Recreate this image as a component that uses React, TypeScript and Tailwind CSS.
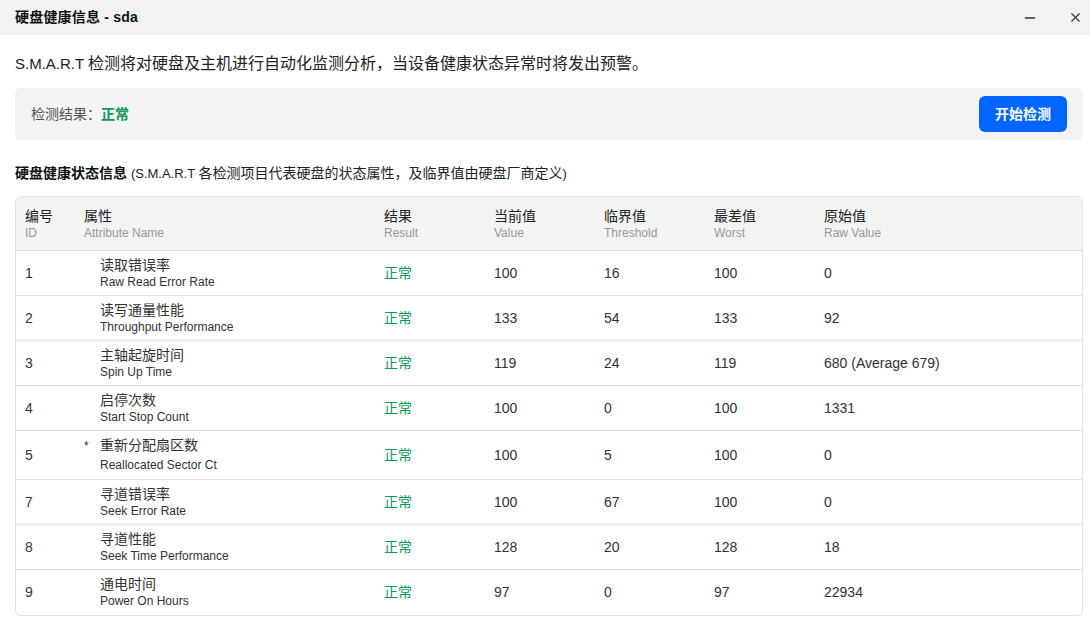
import { Minus, X } from "lucide-react";

interface SmartRow {
  id: string;
  name: string;
  en: string;
  value: string;
  threshold: string;
  worst: string;
  raw: string;
  star?: boolean;
}

const ROWS: SmartRow[] = [
  { id: "1", name: "读取错误率", en: "Raw Read Error Rate", value: "100", threshold: "16", worst: "100", raw: "0" },
  { id: "2", name: "读写通量性能", en: "Throughput Performance", value: "133", threshold: "54", worst: "133", raw: "92" },
  { id: "3", name: "主轴起旋时间", en: "Spin Up Time", value: "119", threshold: "24", worst: "119", raw: "680 (Average 679)" },
  { id: "4", name: "启停次数", en: "Start Stop Count", value: "100", threshold: "0", worst: "100", raw: "1331" },
  { id: "5", name: "重新分配扇区数", en: "Reallocated Sector Ct", value: "100", threshold: "5", worst: "100", raw: "0", star: true },
  { id: "7", name: "寻道错误率", en: "Seek Error Rate", value: "100", threshold: "67", worst: "100", raw: "0" },
  { id: "8", name: "寻道性能", en: "Seek Time Performance", value: "128", threshold: "20", worst: "128", raw: "18" },
  { id: "9", name: "通电时间", en: "Power On Hours", value: "97", threshold: "0", worst: "97", raw: "22934" },
];

const HEADERS = [
  { zh: "编号", en: "ID", w: "w-[59px]" },
  { zh: "属性", en: "Attribute Name", w: "w-[300px]" },
  { zh: "结果", en: "Result", w: "w-[110px]" },
  { zh: "当前值", en: "Value", w: "w-[110px]" },
  { zh: "临界值", en: "Threshold", w: "w-[110px]" },
  { zh: "最差值", en: "Worst", w: "w-[110px]" },
  { zh: "原始值", en: "Raw Value", w: "flex-1" },
];

function Row({ row, last }: { row: SmartRow; last: boolean }) {
  return (
    <div className={`flex items-center pl-[9px] text-[14px] text-[#333] ${row.star ? "h-[49px]" : "h-[45px]"} ${last ? "" : "border-b border-[#e3e3e3]"}`}>
      <div className="w-[59px]">{row.id}</div>
      <div className="w-[300px] flex items-start">
        <span className="w-[16px] text-[12px] leading-[16px] pt-[1px]">{row.star ? "*" : ""}</span>
        <div className="flex flex-col">
          <span className="text-[14px] leading-[17px]">{row.name}</span>
          <span className={`text-[12px] leading-[16px] ${row.star ? "mt-[3px]" : ""}`}>{row.en}</span>
        </div>
      </div>
      <div className="w-[110px] text-[#0a9a5a]">正常</div>
      <div className="w-[110px]">{row.value}</div>
      <div className="w-[110px]">{row.threshold}</div>
      <div className="w-[110px]">{row.worst}</div>
      <div className="flex-1">{row.raw}</div>
    </div>
  );
}

export default function App() {
  return (
    <div className="w-[1090px] h-[621px] bg-white overflow-hidden" style={{ fontFamily: '"Liberation Sans", Arial, "Noto Sans CJK SC", sans-serif' }}>
      {/* title bar */}
      <div className="h-[35px] bg-[#f2f2f2] flex items-center pl-[15px] pr-[7px]">
        <div className="text-[14px] font-bold text-[#111] tracking-[0.2px]">硬盘健康信息 - sda</div>
        <div className="ml-auto flex items-center gap-[30px] text-[#333]">
          <Minus className="w-[16px] h-[16px]" strokeWidth={2} />
          <X className="w-[15px] h-[15px]" strokeWidth={1.8} />
        </div>
      </div>

      <div className="px-[15px] pr-[7px]">
        <p className="mt-[19px] text-[16px] leading-[20px] text-[#222]">
          <span className="text-[15px]">S.M.A.R.T </span>检测将对硬盘及主机进行自动化监测分析，当设备健康状态异常时将发出预警。
        </p>

        <div className="mt-[14px] h-[52px] bg-[#f3f3f3] rounded-[6px] flex items-center pl-[16px] pr-[16px]">
          <span className="text-[14px] text-[#555]">检测结果：</span>
          <span className="text-[14px] font-bold text-[#0a9a5a]">正常</span>
          <button className="ml-auto h-[36px] w-[88px] bg-[#0066ff] rounded-[6px] text-white text-[14px] font-bold">
            开始检测
          </button>
        </div>

        <div className="mt-[24px] text-[14px] leading-[18px] text-[#222]">
          <span className="font-bold text-[#111]">硬盘健康状态信息</span> <span className="text-[13px]">(S.M.A.R.T </span>各检测项目代表硬盘的状态属性，及临界值由硬盘厂商定义<span className="text-[13px]">)</span>
        </div>

        <div className="mt-[13px] border border-[#e3e3e3] rounded-[6px] overflow-hidden">
          <div className="h-[54px] bg-[#f3f3f3] flex items-center pl-[9px] border-b border-[#dcdcdc]">
            {HEADERS.map((h) => (
              <div key={h.en} className={`${h.w} flex flex-col`}>
                <span className="text-[14px] leading-[18px] text-[#222]">{h.zh}</span>
                <span className="text-[12px] leading-[16px] text-[#999]">{h.en}</span>
              </div>
            ))}
          </div>
          {ROWS.map((r, i) => (
            <Row key={r.id} row={r} last={i === ROWS.length - 1} />
          ))}
        </div>
      </div>
    </div>
  );
}
